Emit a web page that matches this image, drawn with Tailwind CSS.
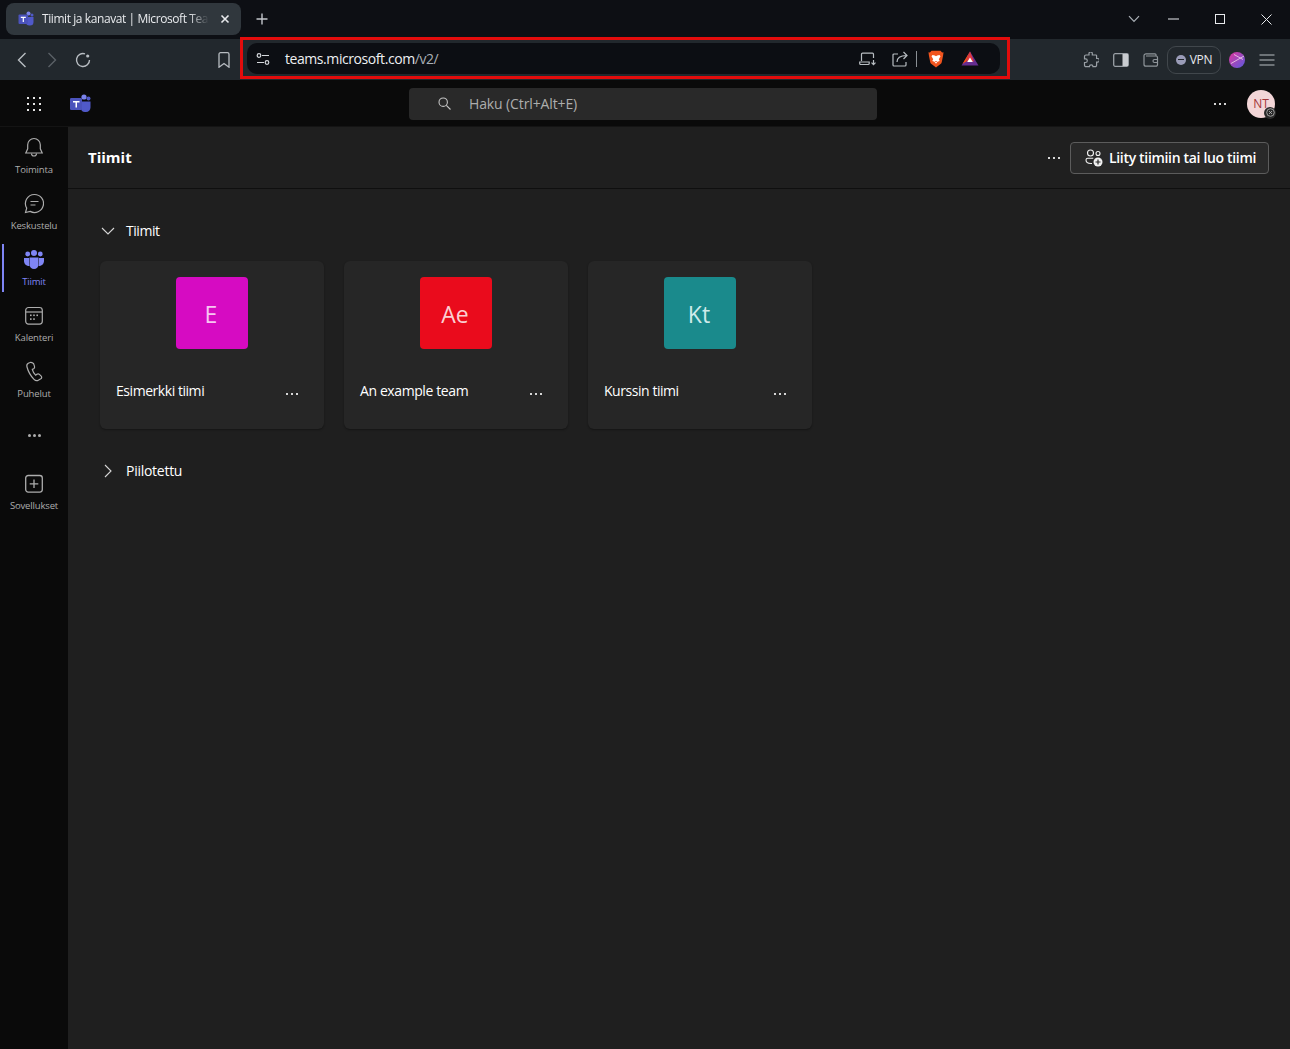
<!DOCTYPE html>
<html lang="fi">
<head>
<meta charset="utf-8">
<title>Tiimit ja kanavat | Microsoft Teams</title>
<script src="https://cdn.jsdelivr.net/npm/@tailwindcss/browser@4"></script>
</head>
<body class="bg-[#1f1f1f] overflow-hidden">
<div class="relative w-[1290px] h-[1049px] flex flex-col overflow-hidden text-white font-['Open_Sans','Noto_Sans',sans-serif]">

  <!-- tab strip -->
  <div class="h-[39px] shrink-0 bg-[#0d0f14] flex items-start pl-[6px]">
    <div class="mt-[3px] w-[235px] h-[32px] rounded-lg bg-[#30373d] flex items-center pl-[12px] pr-[10px]">
      <svg class="w-[16px] h-[16px] shrink-0" viewBox="0 0 16 16"><circle cx="10.5" cy="2.5" r="2" fill="#7b83eb"/><circle cx="14" cy="4" r="1.5" fill="#5059c9"/><path d="M8 6h7.500v5a3.500 3.500 0 0 1-3.500 3.500h-.5a3.500 3.500 0 0 1-3.500-3.500z" fill="#5059c9"/><rect x="0.500" y="3.500" width="9.500" height="9.500" rx="1" fill="#4b53bc"/><path d="M2.800 5.800h5v1.100H5.900v4.100H4.700V6.900H2.800z" fill="#fff"/></svg>
      <span class="ml-[8px] w-[167px] overflow-hidden whitespace-nowrap text-[12px] tracking-[-0.42px] text-[#e8eaed] [mask-image:linear-gradient(to_right,black_88%,transparent)]">Tiimit ja kanavat | Microsoft Teams</span>
      <svg class="ml-[11px] w-[10px] h-[10px] shrink-0" viewBox="0 0 10 10" fill="none" stroke="#e8eaed" stroke-width="1.6"><path d="M1.500 1.500l7 7M8.500 1.500l-7 7"/></svg>
    </div>
    <svg class="ml-[15px] mt-[13px] w-[12px] h-[12px]" viewBox="0 0 12 12" fill="none" stroke="#c4c7cc" stroke-width="1.4"><path d="M6 .5v11M.5 6h11"/></svg>
    <div class="ml-auto flex items-center h-[38px]">
      <svg class="w-[12px] h-[8px]" viewBox="0 0 12 8" fill="none" stroke="#aab0b6" stroke-width="1.2"><path d="M1 1.200l5 5.300 5-5.300"/></svg>
      <svg class="ml-[28px] w-[11px] h-[2px]" viewBox="0 0 11 2"><rect width="11" height="1" y=".5" fill="#e8eaed"/></svg>
      <svg class="ml-[36px] w-[10px] h-[10px]" viewBox="0 0 10 10" fill="none" stroke="#e8eaed"><rect x=".5" y=".5" width="9" height="9"/></svg>
      <svg class="ml-[36px] mr-[18px] w-[11px] h-[11px]" viewBox="0 0 11 11" fill="none" stroke="#e8eaed"><path d="M.5.5l10 10M10.500.5l-10 10"/></svg>
    </div>
  </div>

  <!-- toolbar -->
  <div class="h-[41px] shrink-0 bg-[#22282d] flex items-center">
    <svg class="ml-[17px] w-[10px] h-[16px]" viewBox="0 0 10 16" fill="none" stroke="#b8bdc2" stroke-width="1.4"><path d="M8.500 1L1.500 8l7 7"/></svg>
    <svg class="ml-[20px] w-[10px] h-[16px]" viewBox="0 0 10 16" fill="none" stroke="#5a6066" stroke-width="1.4"><path d="M1.500 1l7 7-7 7"/></svg>
    <svg class="ml-[17px] w-[18px] h-[18px]" viewBox="0 0 18 18" fill="none" stroke="#b8bdc2" stroke-width="1.4"><path d="M15.500 9A6.500 6.500 0 1 1 11 2.800"/><circle cx="13.700" cy="5" r="1.600" fill="#b8bdc2" stroke="none"/></svg>
    <svg class="ml-[126px] w-[12px] h-[16px]" viewBox="0 0 12 16" fill="none" stroke="#b8bdc2" stroke-width="1.3"><path d="M1 2.200A1.500 1.500 0 0 1 2.500.7h7A1.500 1.500 0 0 1 11 2.200v13L6 11.500 1 15.200z"/></svg>

    <div class="ml-[17px] w-[753px] h-[31px] mt-[-2px] rounded-[10px] bg-[#0c0e13] flex items-center pl-[9px] pr-[21px]">
      <svg class="w-[14px] h-[14px] shrink-0" viewBox="0 0 14 14" fill="none" stroke="#d5d8dc" stroke-width="1.2"><circle cx="3" cy="3.500" r="1.800"/><path d="M6 3.500h7M1 10.500h7"/><circle cx="11" cy="10.500" r="1.800"/></svg>
      <span class="ml-[15px] text-[14px] tracking-[-0.43px] whitespace-nowrap text-[#eef0f2]">teams.microsoft.com<span class="text-[#a9afb5]">/v2/</span></span>
      <svg class="ml-auto w-[18px] h-[14px]" viewBox="0 0 18 14" fill="none" stroke="#b8bdc2" stroke-width="1.2"><path d="M2.500 9V2.200a1 1 0 0 1 1-1h10a1 1 0 0 1 1 1V6"/><path d="M.7 10h9.500v1.500a1 1 0 0 1-1 1H1.700a1 1 0 0 1-1-1z"/><path d="M14.500 8v4.500M12.500 10.700l2 2 2-2"/></svg>
      <svg class="ml-[15px] w-[16px] h-[16px]" viewBox="0 0 16 16" fill="none" stroke="#b8bdc2" stroke-width="1.2"><path d="M6 3H2a1 1 0 0 0-1 1v10a1 1 0 0 0 1 1h11a1 1 0 0 0 1-1v-3"/><path d="M5 11c0-4 3-6.500 9.500-6.500M11.500 1l3.500 3.500L11.500 8"/></svg>
      <div class="ml-[8px] w-px h-[16px] bg-[#8a8f94]"></div>
      <svg class="ml-[11px] w-[16px] h-[18px]" viewBox="0 0 16 18"><path d="M3.500 .8h9l1.600 1.800 1.400-.3-.4 3.200-1.300 6.500c-.2.900-.6 1.500-1.300 2L8 17.500l-4.500-3.500c-.7-.5-1.100-1.100-1.300-2L.9 5.500.5 2.300l1.400.3z" fill="#f1541e"/><path d="M4.500 5l2.300.5L8 6.300l1.200-.8 2.300-.5 1 1.300-1.700 3 .9 1.800-2.200.7-1.500 2-1.500-2-2.200-.7.900-1.800-1.700-3z" fill="#fff"/><path d="M6.800 11h2.400L8 12.300z" fill="#f1541e"/></svg>
      <svg class="ml-[17px] w-[18px] h-[15px]" viewBox="0 0 18 15"><path d="M9 .5L17.500 14.500H.5z" fill="#662d91"/><path d="M9 .5L1.500 13 5 10.500z" fill="#ff5000"/><path d="M9 .5L5 10.500h8z" fill="#e0383e"/><path d="M9 6.500l-2.800 4.500h5.600z" fill="#fff"/></svg>
    </div>

    <svg class="ml-[83px] w-[16px] h-[16px]" viewBox="0 0 16 16" fill="none" stroke="#9aa0a6" stroke-width="1.2"><path d="M6 1.200a1.700 1.700 0 0 1 3.300 0V3h3.500a.8.8 0 0 1 .8.800V6.500h1a1.800 1.800 0 0 1 0 3.600h-1v3.100a1.500 1.500 0 0 1-1.500 1.500H10a1.800 1.800 0 0 0-3.600 0H3a1.500 1.500 0 0 1-1.500-1.500V10.500h1a1.800 1.800 0 0 0 0-3.600h-1V4.500A1.500 1.500 0 0 1 3 3h3z"/></svg>
    <svg class="ml-[14px] w-[16px] h-[14px]" viewBox="0 0 16 14"><rect x=".7" y=".7" width="14.600" height="12.600" rx="1.500" fill="none" stroke="#9aa0a6" stroke-width="1.300"/><rect x="9.500" y="1" width="5.500" height="12" fill="#c9ccd0"/></svg>
    <svg class="ml-[14px] w-[16px] h-[14px]" viewBox="0 0 16 14" fill="none" stroke="#8f959a" stroke-width="1.200"><path d="M13 3V1.800a1 1 0 0 0-1-1H3A2 2 0 0 0 1 2.800v8.400a2 2 0 0 0 2 2h10a1.500 1.500 0 0 0 1.500-1.500V4.500A1.500 1.500 0 0 0 13 3H3"/><path d="M15 6.500h-3.500a1.500 1.500 0 0 0 0 3H15"/></svg>
    <div class="ml-[8px] w-[54px] h-[28px] rounded-[9px] border border-[#41474c] flex items-center justify-center gap-[4px]">
      <span class="w-[10px] h-[10px] rounded-full bg-[#9a9cb8] flex items-center justify-center"><span class="w-[6px] h-[1.500px] bg-[#22282d]"></span></span>
      <span class="text-[12px] tracking-[-0.3px] text-[#e8eaed]">VPN</span>
    </div>
    <svg class="ml-[8px] w-[16px] h-[16px]" viewBox="0 0 16 16"><defs><linearGradient id="p" x1="0" y1="0" x2="1" y2="1"><stop offset="0" stop-color="#e0359b"/><stop offset="1" stop-color="#5a5be0"/></linearGradient></defs><circle cx="8" cy="8" r="8" fill="url(#p)"/><path d="M2 11.500L15 4M5 2.500l9 5" stroke="#f4d5e8" stroke-width=".8" fill="none"/></svg>
    <svg class="ml-[14px] w-[16px] h-[12px]" viewBox="0 0 16 12" stroke="#b8bdc2" stroke-width="1.200"><path d="M.5 1h15M.5 6h15M.5 11h15"/></svg>
  </div>

  <!-- teams header -->
  <div class="h-[47px] shrink-0 pt-[1px] bg-[#0a0a0a] border-b border-[#141414] flex items-center">
    <svg class="ml-[26px] w-[16px] h-[16px]" viewBox="0 0 16 16" fill="#e6e6e6"><rect x="1" y="1" width="2" height="2"/><rect x="7" y="1" width="2" height="2"/><rect x="13" y="1" width="2" height="2"/><rect x="1" y="7" width="2" height="2"/><rect x="7" y="7" width="2" height="2"/><rect x="13" y="7" width="2" height="2"/><rect x="1" y="13" width="2" height="2"/><rect x="7" y="13" width="2" height="2"/><rect x="13" y="13" width="2" height="2"/></svg>
    <svg class="ml-[28px] w-[21px] h-[19px]" viewBox="0 0 21 19"><circle cx="14" cy="3" r="2.600" fill="#7b83eb"/><circle cx="18.500" cy="4.500" r="2" fill="#5059c9"/><path d="M11 7.500h9.500v6a4.500 4.500 0 0 1-4.500 4.500h-1a4 4 0 0 1-4-4z" fill="#5059c9"/><rect x="0" y="4" width="12" height="12" rx="1.300" fill="#4b53bc"/><path d="M3 7h6.500v1.500H7v5H5.500v-5H3z" fill="#fff"/></svg>
    <div class="ml-[318px] w-[468px] h-[32px] rounded-[4px] bg-[#292929] flex items-center pl-[29px]">
      <svg class="w-[13px] h-[13px]" viewBox="0 0 13 13" fill="none" stroke="#c4c4c4" stroke-width="1.100"><circle cx="5.200" cy="5.200" r="4.200"/><path d="M8.300 8.300l4.200 4.200"/></svg>
      <span class="ml-[18px] text-[14px] tracking-[-0.12px] text-[#adadad]">Haku (Ctrl+Alt+E)</span>
    </div>
    <div class="ml-[337px] flex gap-[3px]"><span class="w-[2px] h-[2px] bg-[#d6d6d6]"></span><span class="w-[2px] h-[2px] bg-[#d6d6d6]"></span><span class="w-[2px] h-[2px] bg-[#d6d6d6]"></span></div>
    <div class="ml-[21px] relative w-[28px] h-[28px] rounded-full bg-[#f3d6d8] flex items-center justify-center text-[12px] font-medium text-[#a4373a]">NT
      <span class="absolute right-[-1px] bottom-[-1px] w-[12px] h-[12px] rounded-full bg-[#2a2a2a] flex items-center justify-center">
        <svg class="w-[9px] h-[9px]" viewBox="0 0 9 9" fill="none" stroke="#bbb" stroke-width=".8"><circle cx="4.500" cy="4.500" r="3.800"/><path d="M3 3l3 3M6 3L3 6"/></svg>
      </span>
    </div>
  </div>

  <!-- body -->
  <div class="flex-1 flex min-h-0">
    <!-- sidebar -->
    <nav class="w-[68px] shrink-0 bg-[#0a0a0a] flex flex-col items-stretch text-[9.500px] tracking-[-0.15px] text-[#adadad]">
      <div class="h-[56px] flex flex-col items-center pt-[10px]">
        <svg class="w-[20px] h-[22px]" viewBox="0 0 20 22" fill="none" stroke="#adadad" stroke-width="1.200"><path d="M10 1.500a6.300 6.300 0 0 0-6.300 6.300v4L1.800 16h16.400l-1.900-4.200v-4A6.300 6.300 0 0 0 10 1.500z"/><path d="M7.500 16.500a2.500 2.500 0 0 0 5 0"/></svg>
        <span class="mt-[4px] leading-[13px]">Toiminta</span>
      </div>
      <div class="h-[56px] flex flex-col items-center pt-[10px]">
        <svg class="w-[20px] h-[22px]" viewBox="0 0 20 22" fill="none" stroke="#adadad" stroke-width="1.200"><path d="M10.500 1.500a9 9 0 1 1-4.300 16.900L1.500 19.500l1.200-4.400A9 9 0 0 1 10.500 1.500z"/><path d="M6.500 8.500h8M6.500 12h5"/></svg>
        <span class="mt-[4px] leading-[13px]">Keskustelu</span>
      </div>
      <div class="relative h-[56px] flex flex-col items-center pt-[10px] text-[#7f85f5]">
        <span class="absolute left-[2px] top-[5px] w-[2px] h-[48px] bg-[#7f85f5]"></span>
        <svg class="w-[20px] h-[22px]" viewBox="0 0 20 22" fill="#7f85f5"><circle cx="10" cy="4" r="3"/><circle cx="3.700" cy="5" r="2.400"/><circle cx="16.300" cy="5" r="2.400"/><path d="M0 9h5v5.500c0 1 .2 1.900.6 2.500C2.500 17 0 15 0 12z"/><path d="M20 9h-5v5.500c0 1-.2 1.900-.6 2.500 3.100 0 5.600-2 5.600-5z"/><path d="M5.500 8.500h9v7a4.500 4.500 0 0 1-9 0z"/></svg>
        <span class="mt-[4px] leading-[13px]">Tiimit</span>
      </div>
      <div class="h-[56px] flex flex-col items-center pt-[10px]">
        <svg class="w-[20px] h-[22px]" viewBox="0 0 20 22" fill="none" stroke="#adadad" stroke-width="1.200"><rect x="1.700" y="2.500" width="16.600" height="16.600" rx="2.800"/><path d="M2 7h16"/><g fill="#adadad" stroke="none"><rect x="6" y="9.500" width="1.600" height="1.600"/><rect x="9.200" y="9.500" width="1.600" height="1.600"/><rect x="12.400" y="9.500" width="1.600" height="1.600"/><rect x="6" y="13.300" width="1.600" height="1.600"/><rect x="9.200" y="13.300" width="1.600" height="1.600"/></g></svg>
        <span class="mt-[4px] leading-[13px]">Kalenteri</span>
      </div>
      <div class="h-[56px] flex flex-col items-center pt-[10px]">
        <svg class="w-[20px] h-[22px]" viewBox="0 0 20 22" fill="none" stroke="#adadad" stroke-width="1.200"><path d="M6 1.500L4.300 2.300C3 3 2.500 4.300 3 6c1.200 4.500 3.700 9 7 12.300 1.200 1.200 2.800 1.700 4.300.9l2.500-1.400c1-.6 1.200-1.800.4-2.600l-1.800-1.800c-.7-.7-1.700-.8-2.500-.2l-1.300 1c-1.500-1.500-2.800-3.800-3.300-5.800l1.400-.7c.8-.5 1.100-1.400.8-2.300l-1-3C8.100 1.500 7 1 6 1.500z"/></svg>
        <span class="mt-[4px] leading-[13px]">Puhelut</span>
      </div>
      <div class="h-[56px] flex items-center justify-center gap-[2px]"><span class="w-[3px] h-[3px] rounded-full bg-[#adadad]"></span><span class="w-[3px] h-[3px] rounded-full bg-[#adadad]"></span><span class="w-[3px] h-[3px] rounded-full bg-[#adadad]"></span></div>
      <div class="h-[56px] flex flex-col items-center pt-[10px]">
        <svg class="w-[20px] h-[22px]" viewBox="0 0 20 22" fill="none" stroke="#adadad" stroke-width="1.300"><rect x="1.700" y="2.500" width="16.600" height="16.600" rx="2.500"/><path d="M10 6.500v8.500M5.700 10.800h8.600"/></svg>
        <span class="mt-[4px] leading-[13px]">Sovellukset</span>
      </div>
    </nav>

    <!-- main -->
    <main class="flex-1 min-w-0 bg-[#1f1f1f]">
      <div class="h-[62px] border-b border-[#0f0f0f] flex items-center pl-[20px] pr-[21px]">
        <h1 class="text-[15px] font-bold">Tiimit</h1>
        <div class="ml-auto flex items-center">
          <div class="flex gap-[3px] mr-[10px]"><span class="w-[2px] h-[2px] bg-[#d6d6d6]"></span><span class="w-[2px] h-[2px] bg-[#d6d6d6]"></span><span class="w-[2px] h-[2px] bg-[#d6d6d6]"></span></div>
          <button class="w-[199px] h-[32px] rounded-[4px] border border-[#5c5c5c] bg-[#292929] flex items-center pl-[14px]">
            <svg class="w-[18px] h-[18px]" viewBox="0 0 18 18" fill="none" stroke="#f0f0f0" stroke-width="1.100"><circle cx="5.500" cy="4" r="3"/><circle cx="13" cy="4.500" r="2"/><path d="M1 11a1.800 1.800 0 0 1 1.800-1.800h5.500M1 11c0 2.500 2 3.500 5 3.500h1"/><circle cx="13" cy="13" r="4.500" fill="#f0f0f0" stroke="none"/><path d="M13 10.500v5M10.500 13h5" stroke="#292929" stroke-width="1.200"/></svg>
            <span class="ml-[6px] text-[14px] font-semibold tracking-[-0.33px] whitespace-nowrap">Liity tiimiin tai luo tiimi</span>
          </button>
        </div>
      </div>

      <section class="pt-[32px] pl-[32px]">
        <div class="h-[20px] flex items-center">
          <svg class="ml-[1px] w-[14px] h-[8px]" viewBox="0 0 14 8" fill="none" stroke="#d6d6d6" stroke-width="1.100"><path d="M1 1l6 6 6-6"/></svg>
          <span class="ml-[11px] mt-[-2px] text-[14px] tracking-[-0.45px]">Tiimit</span>
        </div>
        <div class="mt-[20px] flex gap-[20px]">
          <article class="w-[224px] h-[168px] rounded-[6px] bg-[#262626] shadow-[0_1px_2px_rgba(0,0,0,0.35)] pt-[16px]">
            <div class="mx-auto w-[72px] h-[72px] rounded-[4px] bg-[#d60bc2] flex items-center justify-center text-[23px] text-[#f7c6f1] pr-[2px] pt-[2px]">E</div>
            <div class="mt-[31px] pl-[16px] pr-[26px] flex items-center justify-between"><span class="text-[14px] tracking-[-0.45px]">Esimerkki tiimi</span><div class="flex gap-[3px] translate-y-[3px]"><span class="w-[2px] h-[2px] bg-[#d6d6d6]"></span><span class="w-[2px] h-[2px] bg-[#d6d6d6]"></span><span class="w-[2px] h-[2px] bg-[#d6d6d6]"></span></div></div>
          </article>
          <article class="w-[224px] h-[168px] rounded-[6px] bg-[#262626] shadow-[0_1px_2px_rgba(0,0,0,0.35)] pt-[16px]">
            <div class="mx-auto w-[72px] h-[72px] rounded-[4px] bg-[#ea0b1c] flex items-center justify-center text-[23px] text-[#fbd0d3] pr-[2px] pt-[2px]">Ae</div>
            <div class="mt-[31px] pl-[16px] pr-[26px] flex items-center justify-between"><span class="text-[14px] tracking-[-0.4px]">An example team</span><div class="flex gap-[3px] translate-y-[3px]"><span class="w-[2px] h-[2px] bg-[#d6d6d6]"></span><span class="w-[2px] h-[2px] bg-[#d6d6d6]"></span><span class="w-[2px] h-[2px] bg-[#d6d6d6]"></span></div></div>
          </article>
          <article class="w-[224px] h-[168px] rounded-[6px] bg-[#262626] shadow-[0_1px_2px_rgba(0,0,0,0.35)] pt-[16px]">
            <div class="mx-auto w-[72px] h-[72px] rounded-[4px] bg-[#1a8a8c] flex items-center justify-center text-[23px] text-[#cfeaea] pr-[2px] pt-[2px]">Kt</div>
            <div class="mt-[31px] pl-[16px] pr-[26px] flex items-center justify-between"><span class="text-[14px] tracking-[-0.45px]">Kurssin tiimi</span><div class="flex gap-[3px] translate-y-[3px]"><span class="w-[2px] h-[2px] bg-[#d6d6d6]"></span><span class="w-[2px] h-[2px] bg-[#d6d6d6]"></span><span class="w-[2px] h-[2px] bg-[#d6d6d6]"></span></div></div>
          </article>
        </div>
        <div class="mt-[32px] h-[20px] flex items-center">
          <svg class="ml-[4px] w-[8px] h-[14px]" viewBox="0 0 8 14" fill="none" stroke="#d6d6d6" stroke-width="1.100"><path d="M1 1l6 6-6 6"/></svg>
          <span class="ml-[14px] mt-[-2px] text-[14px] tracking-[-0.27px]">Piilotettu</span>
        </div>
      </section>
    </main>
  </div>

  <!-- red annotation frame over the address bar -->
  <div class="absolute left-[240px] top-[37px] w-[770px] h-[42px] border-[3px] border-[#e30c0c] pointer-events-none"></div>
</div>
</body>
</html>
